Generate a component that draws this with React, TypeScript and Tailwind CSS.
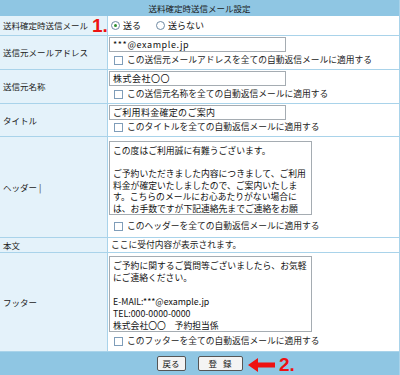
import React from "react";

const font = { fontFamily: '"Noto Sans CJK JP", "Noto Sans", sans-serif' };

function Checkbox({ label }: { label: string }) {
  return (
    <div className="flex items-center h-[16px] pl-[5px] gap-[4px]">
      <span className="inline-block w-[9px] h-[9px] border border-[#7f9db9] bg-white" />
      <span className="text-[8.75px] leading-none text-[#222]">{label}</span>
    </div>
  );
}

function Input({ value, track }: { value: string; track?: string }) {
  return (
    <div
      className={`w-[177px] h-[15px] border border-[#a5acb2] bg-white flex items-center pl-[3px] text-[9px] leading-none text-[#111] ${track ?? ""}`}
    >
      {value}
    </div>
  );
}

function Row({
  label,
  h,
  children,
  center = true,
}: {
  label: string;
  h: string;
  children: React.ReactNode;
  center?: boolean;
}) {
  return (
    <div className={`flex ${h} border-b border-[#a9d3ea]`}>
      <div className="w-[108px] shrink-0 bg-[#e4f2fa] border-r border-[#a9d3ea] flex items-center pl-[3px] text-[8.5px] leading-none text-[#222]">
        {label}
      </div>
      <div className={`flex-1 flex flex-col ${center ? "justify-center" : ""} pl-[1px]`}>{children}</div>
    </div>
  );
}

const headerLines = [
  "この度はご利用誠に有難うございます。",
  "",
  "ご予約いただきました内容につきまして、ご利用",
  "料金が確定いたしましたので、ご案内いたしま",
  "す。こちらのメールにお心あたりがない場合に",
  "は、お手数ですが下記連絡先までご連絡をお願",
];

const footerLines = [
  "ご予約に関するご質問等ございましたら、お気軽",
  "にご連絡ください。",
  "",
  "E-MAIL:***@example.jp",
  "TEL:000-0000-0000",
  "株式会社〇〇　予約担当係",
];

function TextBox({ lines, h, lh }: { lines: string[]; h: string; lh: string }) {
  return (
    <div className={`w-[203px] ${h} border border-[#a5acb2] bg-white overflow-hidden pt-[3px] pl-[3px] text-[8.8px] text-[#111]`}>
      {lines.map((l, i) => (
        <div key={i} className={`${lh} whitespace-nowrap`}>
          {l}
        </div>
      ))}
    </div>
  );
}

export default function App() {
  return (
    <div style={font} className="relative w-[400px] h-[375px] bg-white flex flex-col overflow-hidden border-r border-[#a9d3ea]">
      <div className="h-[16px] bg-[#8fc6e3] flex items-center justify-center text-[8.5px] leading-none text-[#1a1a1a]">
        送料確定時送信メール設定
      </div>

      <Row label="送料確定時送信メール" h="h-[20px]">
        <div className="flex items-center pl-[2px] text-[9px] leading-none text-[#111]">
          <span className="w-[9px] h-[9px] rounded-full border border-[#6f8aa3] bg-white flex items-center justify-center">
            <span className="w-[3px] h-[3px] rounded-full bg-[#2f8f2f]" />
          </span>
          <span className="ml-[3px]">送る</span>
          <span className="ml-[15px] w-[9px] h-[9px] rounded-full border border-[#6f8aa3] bg-white" />
          <span className="ml-[3px]">送らない</span>
        </div>
      </Row>

      <Row label="送信元メールアドレス" h="h-[34px]">
        <Input value="***@example.jp" track="tracking-[0.6px]" />
        <Checkbox label="この送信元メールアドレスを全ての自動返信メールに適用する" />
      </Row>

      <Row label="送信元名称" h="h-[34px]">
        <Input value="株式会社〇〇" track="tracking-[0.5px]" />
        <Checkbox label="この送信元名称を全ての自動返信メールに適用する" />
      </Row>

      <Row label="タイトル" h="h-[33px]">
        <Input value="ご利用料金確定のご案内" track="tracking-[0.3px]" />
        <Checkbox label="このタイトルを全ての自動返信メールに適用する" />
      </Row>

      <Row label="ヘッダー |" h="h-[101px]" center={false}>
        <div className="pt-[4px]">
          <TextBox lines={headerLines} h="h-[74px]" lh="h-[11.6px] leading-[11.6px]" />
        </div>
        <div className="pt-[3px]">
          <Checkbox label="このヘッダーを全ての自動返信メールに適用する" />
        </div>
      </Row>

      <Row label="本文" h="h-[15px]">
        <div className="pl-[2px] text-[8.75px] leading-none text-[#222]">ここに受付内容が表示されます。</div>
      </Row>

      <Row label="フッター" h="h-[99px]" center={false}>
        <div className="pt-[3px]">
          <TextBox lines={footerLines} h="h-[76px]" lh="h-[12px] leading-[12px]" />
        </div>
        <div className="pt-[1px]">
          <Checkbox label="このフッターを全ての自動返信メールに適用する" />
        </div>
      </Row>

      <div className="flex-1 bg-[#8fc6e3] flex items-center justify-center gap-[12px]">
        <button className="h-[15px] w-[29px] border border-[#555] rounded-[2px] bg-[#f4f4f4] text-[8.5px] leading-none text-[#111]">
          戻る
        </button>
        <button className="h-[15px] w-[45px] border border-[#555] rounded-[2px] bg-[#f4f4f4] text-[8.5px] leading-none text-[#111] tracking-[6px] pl-[6px]">
          登録
        </button>
      </div>

      <div
        className="absolute left-[92px] top-[16px] text-[19px] leading-none font-bold text-[#ee1111]"
        style={{ fontFamily: '"Liberation Sans", Arial, sans-serif' }}
      >
        1.
      </div>

      <div className="absolute left-[248px] top-[355px] flex items-center gap-[4px]">
        <svg width="27" height="14" viewBox="0 0 27 14">
          <polygon points="0,7 10,0 10,4.5 27,4.5 27,9.5 10,9.5 10,14" fill="#ee1111" />
        </svg>
        <span
          className="text-[19px] leading-none font-bold text-[#ee1111]"
          style={{ fontFamily: '"Liberation Sans", Arial, sans-serif' }}
        >
          2.
        </span>
      </div>
    </div>
  );
}
